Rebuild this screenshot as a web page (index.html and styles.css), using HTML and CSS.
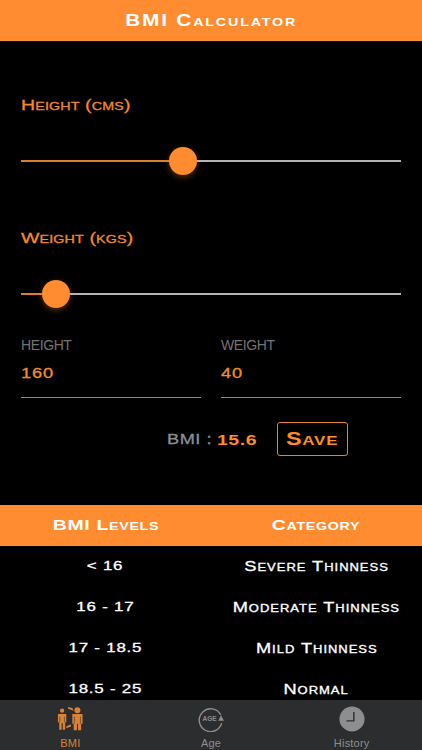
FILE: index.html
```html
<!DOCTYPE html>
<html lang="en">

<head>
    <meta charset="UTF-8">
    <meta name="viewport" content="width=device-width, initial-scale=1.0">
    <title>BMI Calculator</title>
    <link rel="stylesheet" href="styles.css">
</head>

<body>
    <div class="app">
        <header class="title-bar"><span class="wide">BMI Calculator</span></header>

        <main class="content">
            <section class="sliders">
                <div class="slider-block">
                    <div class="slider-label"><span class="wide wide-left">Height (cms)</span></div>
                    <div class="slider">
                        <div class="slider-fill height-fill"></div>
                        <div class="slider-thumb"></div>
                        <div class="slider-rest"></div>
                    </div>
                </div>
                <div class="slider-block">
                    <div class="slider-label"><span class="wide wide-left">Weight (kgs)</span></div>
                    <div class="slider">
                        <div class="slider-fill weight-fill"></div>
                        <div class="slider-thumb"></div>
                        <div class="slider-rest"></div>
                    </div>
                </div>
            </section>

            <section class="fields">
                <div class="field">
                    <div class="field-label">HEIGHT</div>
                    <div class="field-value"><span class="wide wide-left">160</span></div>
                </div>
                <div class="field">
                    <div class="field-label">WEIGHT</div>
                    <div class="field-value"><span class="wide wide-left">40</span></div>
                </div>
            </section>

            <section class="result">
                <span class="result-label"><span class="wide wide-left">BMI :</span></span>
                <span class="result-value"><span class="wide wide-left">15.6</span></span>
                <button class="save-button"><span class="wide">Save</span></button>
            </section>

            <section class="levels">
                <div class="levels-head">
                    <div><span class="wide">BMI Levels</span></div>
                    <div><span class="wide">Category</span></div>
                </div>
                <div class="levels-row">
                    <div class="level-range"><span class="wide">&lt; 16</span></div>
                    <div><span class="wide">Severe Thinness</span></div>
                </div>
                <div class="levels-row">
                    <div class="level-range"><span class="wide">16 - 17</span></div>
                    <div><span class="wide">Moderate Thinness</span></div>
                </div>
                <div class="levels-row">
                    <div class="level-range"><span class="wide">17 - 18.5</span></div>
                    <div><span class="wide">Mild Thinness</span></div>
                </div>
                <div class="levels-row">
                    <div class="level-range"><span class="wide">18.5 - 25</span></div>
                    <div><span class="wide">Normal</span></div>
                </div>
            </section>
        </main>

        <nav class="tab-bar">
            <div class="tab tab-active">
                <svg class="tab-icon" viewBox="0 0 28 28" fill="#d98336">
                    <circle cx="5.500" cy="5" r="2.300" />
                    <path d="M1 8.500h9v9H8.800V25.500H6.200V18.500H5V25.500H2.400V17.500H1z" />
                    <circle cx="22" cy="4.500" r="3.200" />
                    <path d="M16.500 8.500h11v10.500H26V26H22.600V19H21.500V26H18V19H16.500z" />
                    <path d="M12 1.200 16.500 2.200 18 5 12 3z" />
                    <path d="M15 20 10.500 21.500 9.800 24 15 22z" />
                    <path d="M3 11.500V17.500M8 11.500V17.500M18.800 11.500V19M25.200 11.500V19" fill="none" stroke="#2c2d2f" stroke-width="0.600" />
                </svg>
                <span class="tab-text">BMI</span>
            </div>
            <div class="tab">
                <svg class="tab-icon" viewBox="0 0 28 28">
                    <path d="M24.500 9.500A12.300 12.300 0 1 0 25.500 18.500" fill="none" stroke="#8e8e8e" stroke-width="1.500" />
                    <path d="M24.800 10 28 16H21.800z" fill="#8e8e8e" />
                    <text x="12.500" y="16.500" class="age-text">AGE</text>
                </svg>
                <span class="tab-text">Age</span>
            </div>
            <div class="tab">
                <svg class="tab-icon" viewBox="0 0 28 28">
                    <circle cx="14" cy="14" r="13.500" fill="#8e8e8e" />
                    <path d="M16 6.500V16H8" fill="none" stroke="#2c2d2f" stroke-width="1.500" />
                </svg>
                <span class="tab-text">History</span>
            </div>
        </nav>
    </div>
</body>

</html>
```

FILE: styles.css
```css
* {
    box-sizing: border-box;
}

body {
    margin: 0;
    background-color: #000000;
    font-family: 'Liberation Sans', Arial, sans-serif;
}

.app {
    display: flex;
    flex-direction: column;
    height: 100vh;
    overflow: hidden;
}

/* stands in for the wide engraved caps of the original font */
.wide {
    display: inline-block;
    transform: scaleX(1.3);
    white-space: nowrap;
}

.wide-left {
    transform-origin: left center;
}

.title-bar {
    flex: none;
    height: 41px;
    background-color: #ff8c30;
    color: #ffffff;
    display: flex;
    justify-content: center;
    align-items: center;
    font-variant: small-caps;
    font-size: 16px;
    font-weight: bold;
    letter-spacing: 1.4px;
}

.content {
    flex: 1;
    min-height: 0;
    overflow: hidden;
}

.sliders {
    padding: 55px 21px 0;
    display: flex;
    flex-direction: column;
    gap: 54px;
}

.slider-label {
    height: 18px;
    line-height: 18px;
    color: #f08a33;
    font-variant: small-caps;
    font-size: 15px;
    letter-spacing: 0.1px;
    -webkit-text-stroke: 0.3px #f08a33;
    white-space: nowrap;
}

.slider {
    display: flex;
    align-items: center;
    height: 28px;
    margin-top: 33px;
}

.slider-fill {
    height: 2px;
    background-color: #d9802f;
}

.height-fill {
    width: 148px;
}

.weight-fill {
    width: 21px;
}

.slider-thumb {
    flex: none;
    width: 28px;
    height: 28px;
    border-radius: 50%;
    background-color: #ff8c30;
    box-shadow: 0 2px 6px rgba(255, 140, 48, 0.35);
}

.slider-rest {
    flex: 1;
    height: 2px;
    background-color: #b4b4b4;
}

.fields {
    display: flex;
    gap: 20px;
    padding: 29px 21px 0;
}

.field {
    flex: 1;
    height: 61px;
    border-bottom: 1px solid #8a8a8a;
}

.field-label {
    height: 16px;
    line-height: 16px;
    color: #737373;
    font-size: 14px;
    letter-spacing: -0.4px;
}

.field-value {
    margin-top: 11px;
    height: 18px;
    line-height: 18px;
    color: #f08a33;
    font-size: 14px;
    letter-spacing: 0.7px;
    -webkit-text-stroke: 0.3px #f08a33;
}

.result {
    display: flex;
    align-items: center;
    height: 34px;
    margin-top: 24px;
    padding-left: 167px;
    font-weight: bold;
}

.result-label {
    width: 50px;
    color: #8f8f8f;
    font-size: 14px;
    font-weight: normal;
    letter-spacing: 0.4px;
    -webkit-text-stroke: 0.3px #8f8f8f;
}

.result-value {
    width: 60px;
    color: #ff8c30;
    font-size: 15px;
    letter-spacing: 0.4px;
}

.save-button {
    width: 71px;
    height: 34px;
    padding: 0;
    background: none;
    border: 1px solid #e5822f;
    border-radius: 3px;
    color: #ff8c30;
    font-family: 'Liberation Sans', Arial, sans-serif;
    font-variant: small-caps;
    font-size: 18px;
    font-weight: bold;
    letter-spacing: 0.6px;
}

.levels {
    margin-top: 49px;
}

.levels-head,
.levels-row {
    display: grid;
    grid-template-columns: 1fr 1fr;
    align-items: center;
    height: 41px;
    padding-bottom: 2px;
    text-align: center;
    font-variant: small-caps;
    white-space: nowrap;
    color: #ffffff;
}

.levels-head {
    background-color: #ff8c30;
    font-size: 15px;
    font-weight: bold;
    letter-spacing: 0.5px;
}

.levels-row {
    font-size: 14px;
    letter-spacing: 0.75px;
    -webkit-text-stroke: 0.3px #ffffff;
}

.level-range {
    font-size: 13px;
    letter-spacing: 0.6px;
}

.tab-bar {
    flex: none;
    display: flex;
    height: 50px;
    background-color: #2c2d2f;
}

.tab {
    flex: 1;
    display: flex;
    flex-direction: column;
    align-items: center;
    padding-top: 6px;
    color: #8e8e8e;
}

.tab-active {
    color: #d98336;
}

.tab-icon {
    width: 26px;
    height: 26px;
}

.tab-text {
    margin-top: 5px;
    font-size: 11px;
    line-height: 13px;
    letter-spacing: 0.2px;
}

.age-text {
    font-size: 7px;
    font-weight: bold;
    fill: #8e8e8e;
    text-anchor: middle;
}
```
